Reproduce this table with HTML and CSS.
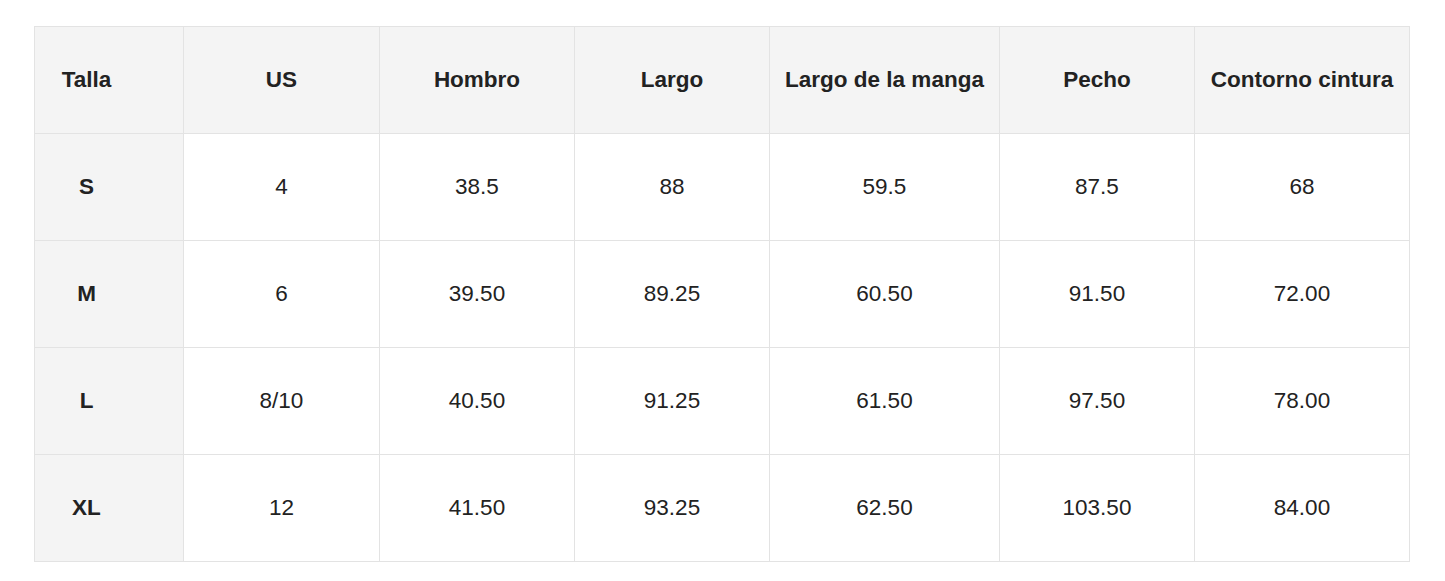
FILE: index.html
```html
<!DOCTYPE html>
<html lang="es">
<head>
<meta charset="utf-8">
<title>Tabla de tallas</title>
<link rel="stylesheet" href="styles.css">
</head>
<body>
<div class="wrap">
<table class="sizes">
<colgroup>
<col class="c1"><col class="c2"><col class="c3"><col class="c4"><col class="c5"><col class="c6"><col class="c7">
</colgroup>
<thead>
<tr><th class="first">Talla</th><th>US</th><th>Hombro</th><th>Largo</th><th>Largo de la manga</th><th>Pecho</th><th>Contorno cintura</th></tr>
</thead>
<tbody>
<tr><th class="first">S</th><td>4</td><td>38.5</td><td>88</td><td>59.5</td><td>87.5</td><td>68</td></tr>
<tr><th class="first">M</th><td>6</td><td>39.50</td><td>89.25</td><td>60.50</td><td>91.50</td><td>72.00</td></tr>
<tr><th class="first">L</th><td>8/10</td><td>40.50</td><td>91.25</td><td>61.50</td><td>97.50</td><td>78.00</td></tr>
<tr><th class="first">XL</th><td>12</td><td>41.50</td><td>93.25</td><td>62.50</td><td>103.50</td><td>84.00</td></tr>
</tbody>
</table>
</div>
</body>
</html>
```
FILE: styles.css
```css
html, body {
  margin: 0;
  padding: 0;
  background: #ffffff;
}
.wrap {
  padding: 26px 0 0 34px;
}
.sizes {
  border-collapse: collapse;
  table-layout: fixed;
  width: 1375px;
  font-family: "Liberation Sans", Arial, sans-serif;
  font-size: 22.5px;
  color: #222222;
}
.c1 { width: 149px; }
.c2 { width: 196px; }
.c3 { width: 195px; }
.c4 { width: 195px; }
.c5 { width: 230px; }
.c6 { width: 195px; }
.c7 { width: 215px; }
.sizes th, .sizes td {
  border: 1px solid #e3e3e3;
  height: 107px;
  padding: 0;
  text-align: center;
  vertical-align: middle;
  box-sizing: border-box;
}
.sizes th {
  background: #f4f4f4;
  font-weight: bold;
}
.sizes th.first {
  padding-right: 45px;
}
.sizes td {
  background: #ffffff;
  font-weight: normal;
}
```
